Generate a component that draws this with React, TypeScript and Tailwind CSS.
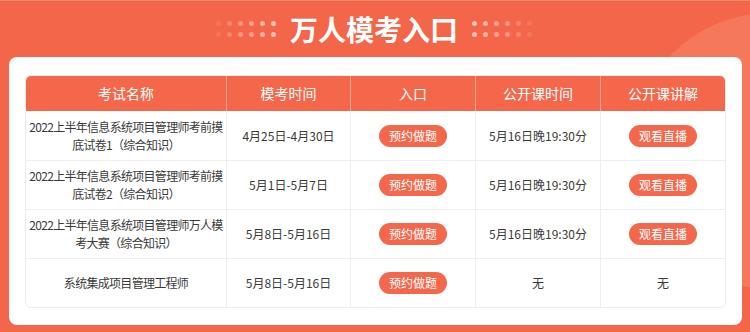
import React from 'react'

type Row = {
  name: string[]
  time: string
  live: string
  replay: boolean
}

const rows: Row[] = [
  { name: ['2022上半年信息系统项目管理师考前摸', '底试卷1（综合知识）'], time: '4月25日-4月30日', live: '5月16日晚19:30分', replay: true },
  { name: ['2022上半年信息系统项目管理师考前摸', '底试卷2（综合知识）'], time: '5月1日-5月7日', live: '5月16日晚19:30分', replay: true },
  { name: ['2022上半年信息系统项目管理师万人模', '考大赛（综合知识）'], time: '5月8日-5月16日', live: '5月16日晚19:30分', replay: true },
  { name: ['系统集成项目管理工程师'], time: '5月8日-5月16日', live: '无', replay: false },
]

const headers = ['考试名称', '模考时间', '入口', '公开课时间', '公开课讲解']

const Dots = ({ reverse }: { reverse?: boolean }) => {
  const ops = ['opacity-10', 'opacity-20', 'opacity-30', 'opacity-40', 'opacity-50', 'opacity-60']
  const list = reverse ? [...ops].reverse() : ops
  return (
    <div className='flex flex-col gap-[6px]'>
      {[0, 1].map((r) => (
        <div key={r} className='flex gap-[6px]'>
          {list.map((o, i) => (
            <span key={i} className={`w-[5px] h-[5px] rounded-full bg-white ${o}`} />
          ))}
        </div>
      ))}
    </div>
  )
}

const Btn = ({ label }: { label: string }) => (
  <span className='inline-flex items-center justify-center w-[68px] h-[22px] rounded-full bg-[#f4674b] text-white text-[12px]'>
    {label}
  </span>
)

const App = () => {
  const cols = 'grid grid-cols-[200px_124px_125px_125px_125px]'
  return (
    <div
      className='relative w-[750px] h-[332px] overflow-hidden bg-[#f4664a] border-t border-[#f7876f]'
      style={{ fontFamily: '"Noto Sans CJK SC", "Noto Sans", sans-serif' }}
    >
      <div className='absolute left-[632px] top-[12px] w-[276px] h-[276px] rounded-full bg-[#f6785c]' />
      <div className='relative h-[56px] flex items-center justify-center gap-[14px] pr-[2px]'>
        <Dots />
        <h1 className='text-white text-[28px] font-bold leading-none'>万人模考入口</h1>
        <Dots reverse />
      </div>
      <div className='relative mr-[8px] ml-[9px] h-[268px] bg-white rounded-[8px] px-[16px] pt-[18px]'>
        <div className='border border-[#ebebeb] rounded-[6px] overflow-hidden'>
          <div className={`${cols} h-[35px] bg-[#f4674b] text-white text-[14px]`}>
            {headers.map((h, i) => (
              <div key={i} className={`flex items-center justify-center ${i > 0 ? 'border-l border-[#f8a590]' : ''}`}>
                {h}
              </div>
            ))}
          </div>
          {rows.map((r, i) => (
            <div key={i} className={`${cols} h-[49px] text-[12px] text-[#3a3a3a] ${i > 0 ? 'border-t border-[#eeeeee]' : ''}`}>
              <div className='flex flex-col items-center justify-center leading-[18px] whitespace-nowrap tracking-[-0.7px]'>
                {r.name.map((l, j) => (
                  <span key={j}>{l}</span>
                ))}
              </div>
              <div className='flex items-center justify-center border-l border-[#eeeeee]'>{r.time}</div>
              <div className='flex items-center justify-center border-l border-[#eeeeee]'>
                <Btn label='预约做题' />
              </div>
              <div className='flex items-center justify-center border-l border-[#eeeeee]'>{r.live}</div>
              <div className='flex items-center justify-center border-l border-[#eeeeee]'>
                {r.replay ? <Btn label='观看直播' /> : '无'}
              </div>
            </div>
          ))}
        </div>
      </div>
    </div>
  )
}

export default App
